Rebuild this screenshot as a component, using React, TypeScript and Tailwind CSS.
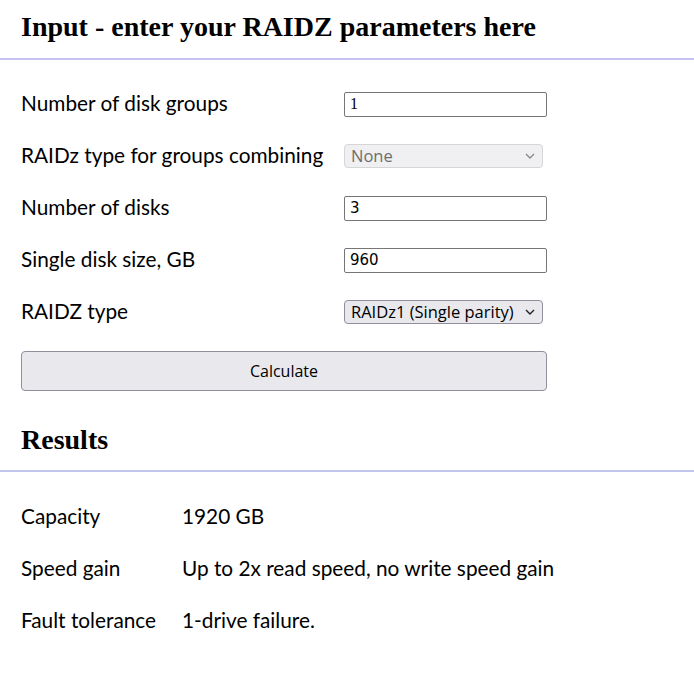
import { useState } from 'react'

function Chevron() {
  return (
    <svg width="10" height="6" viewBox="0 0 10 6" className="pointer-events-none absolute right-[8px] top-1/2 -translate-y-1/2">
      <path d="M1 1l4 4 4-4" fill="none" stroke="currentColor" strokeWidth="1.4" />
    </svg>
  )
}

function Row({ label, children }: { label: string; children: React.ReactNode }) {
  return (
    <div className="flex h-[52px] items-center">
      <div className="w-[323px] pb-[2px] text-[20.8px] text-black">{label}</div>
      {children}
    </div>
  )
}

export default function App() {
  const [groups, setGroups] = useState('1')
  const [disks, setDisks]   = useState('3')
  const [size, setSize]     = useState('960')
  const [type, setType]     = useState('z1')

  const inputCls = 'h-[25px] w-[203px] rounded-[2px] border border-[#767676] bg-white px-[5px] text-[15px] text-black outline-none'

  return (
    <div className="min-h-[682px] bg-white" style={{ fontFamily: 'Lato, sans-serif' }}>

      {/* Input */}
      <div className="border-b-2 border-[#c6c2f4] px-[21px] pt-[10px] pb-[14px]">
        <h1 className="text-[28px] leading-[34px] font-bold text-black" style={{ fontFamily: '"Liberation Serif", serif' }}>
          Input - enter your RAIDZ parameters here
        </h1>
      </div>

      <div className="px-[21px] pt-[18px]">
        <Row label="Number of disk groups">
          <input value={groups} onChange={e => setGroups(e.target.value)} className={inputCls} style={{ fontFamily: '"Liberation Serif", serif', fontSize: 16 }} />
        </Row>
        <Row label="RAIDz type for groups combining">
          <div className="relative text-[#8a8a8a]">
            <select disabled className="h-[24px] w-[199px] appearance-none rounded-[4px] border border-[#d6d6d9] bg-[#f0f0f2] px-[6px] text-[16.5px] leading-[20px] text-[#6d6d6d]" style={{ fontFamily: '"Open Sans", sans-serif' }}>
              <option>None</option>
            </select>
            <Chevron />
          </div>
        </Row>
        <Row label="Number of disks">
          <input value={disks} onChange={e => setDisks(e.target.value)} className={inputCls} style={{ fontFamily: '"DejaVu Sans", sans-serif' }} />
        </Row>
        <Row label="Single disk size, GB">
          <input value={size} onChange={e => setSize(e.target.value)} className={inputCls} style={{ fontFamily: '"DejaVu Sans", sans-serif' }} />
        </Row>
        <Row label="RAIDZ type">
          <div className="relative text-[#222]">
            <select value={type} onChange={e => setType(e.target.value)} className="h-[24px] w-[199px] appearance-none rounded-[4px] border border-[#8f8f9d] bg-[#e9e9ed] px-[6px] text-[16.5px] leading-[20px] text-black" style={{ fontFamily: '"Open Sans", sans-serif' }}>
              <option value="z1">RAIDz1 (Single parity)</option>
              <option value="z2">RAIDz2 (Double parity)</option>
              <option value="z3">RAIDz3 (Triple parity)</option>
            </select>
            <Chevron />
          </div>
        </Row>

        <button className="mt-[13px] h-[40px] w-[526px] rounded-[4px] border border-[#8f8f9d] bg-[#e9e9ed] text-[16px] text-black" style={{ fontFamily: '"Open Sans", sans-serif' }}>
          Calculate
        </button>
      </div>

      {/* Results */}
      <div className="border-b-2 border-[#c2c6ec] px-[21px] pt-[32px] pb-[13px]">
        <h2 className="text-[28px] leading-[34px] font-bold text-black" style={{ fontFamily: '"Liberation Serif", serif' }}>
          Results
        </h2>
      </div>

      <div className="px-[21px] pt-[19px] text-[20.8px] text-black">
        {[
          ['Capacity', '1920 GB'],
          ['Speed gain', 'Up to 2x read speed, no write speed gain'],
          ['Fault tolerance', '1-drive failure.'],
        ].map(([k, v]) => (
          <div key={k} className="flex h-[52px] items-center pb-[2px]">
            <div className="w-[161px]">{k}</div>
            <div>{v}</div>
          </div>
        ))}
      </div>
    </div>
  )
}
